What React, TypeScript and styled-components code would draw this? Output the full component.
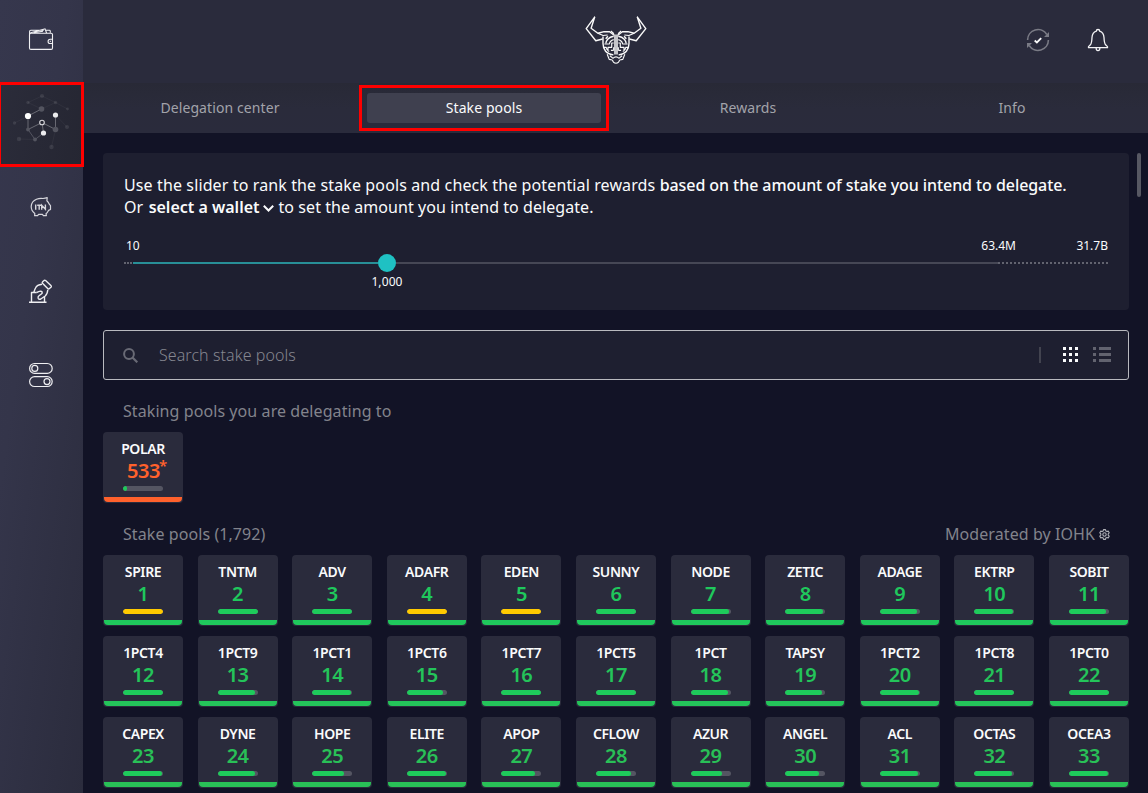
import React from 'react';
import styled, { createGlobalStyle } from 'styled-components';

const GlobalStyle = createGlobalStyle`
  *, *::before, *::after { box-sizing: border-box; }
  body {
    margin: 0;
    overflow: hidden;
    background: #121326;
    font-family: 'Noto Sans', sans-serif;
    color: #fafbfc;
  }
`;

const Window = styled.div`
  display: flex;
  width: 1148px;
  height: 793px;
  overflow: hidden;
`;

const Sidebar = styled.nav`
  flex: none;
  width: 83px;
  display: flex;
  flex-direction: column;
  background: linear-gradient(98deg, #36374d 0%, #34354a 35%, #2b2c3d 100%);
`;

const SidebarItem = styled.div<{ $active?: boolean }>`
  position: relative;
  flex: none;
  height: 84px;
  background: ${(p) => (p.$active ? 'linear-gradient(100deg, #2b2c3a, #252632)' : 'transparent')};

  &:first-child { height: 83px; }

  svg { display: block; }
`;

const Highlight = styled.div<{ $top: number; $left: number; $width: number; $height: number }>`
  position: absolute;
  z-index: 2;
  top: ${(p) => p.$top}px;
  left: ${(p) => p.$left}px;
  width: ${(p) => p.$width}px;
  height: ${(p) => p.$height}px;
  border: 3px solid #fe0000;
`;

const Main = styled.div`
  flex: 1;
  min-width: 0;
  display: flex;
  flex-direction: column;
`;

const Header = styled.header`
  flex: none;
  height: 83px;
  display: grid;
  grid-template-columns: 1fr auto 1fr;
  align-items: center;
  padding: 0 39px 3px 40px;
  background: #2a2b3c;
`;

const HeaderActions = styled.div`
  grid-column: 3;
  display: flex;
  justify-content: flex-end;
  gap: 37px;
`;

const LogoCell = styled.div`
  grid-column: 2;

  svg { display: block; }
`;

const Tabs = styled.div`
  flex: none;
  height: 50px;
  display: flex;
  align-items: center;
  padding: 0 4px 0 5px;
  background: linear-gradient(180deg, #282936 0, #292a38 10px, #2a2b3b 26px, #2a2b3c 100%);
`;

const Tab = styled.div<{ $active?: boolean }>`
  position: relative;
  flex: 1;
  height: 30px;
  margin: 0 15px;
  border-radius: 3px;
  text-align: center;
  font-size: 14px;
  line-height: 30px;
  letter-spacing: 0.1px;
  color: ${(p) => (p.$active ? '#fafbfc' : '#a2a3aa')};
  background: ${(p) => (p.$active ? '#3f404f' : 'transparent')};
`;

const Body = styled.div`
  flex: 1;
  min-height: 0;
  display: flex;
  background: #121326;
`;

const Content = styled.div`
  width: 1046px;
  padding: 20px 0 0 20px;
`;

const ScrollThumb = styled.div`
  width: 4px;
  height: 44px;
  margin: 20px 0 0 8px;
  border-radius: 2px;
  background: #575863;
`;

const RankPanel = styled.section`
  height: 157px;
  padding: 21px 21px 0;
  border-radius: 4px;
  background: #1e1f30;
`;

const Instructions = styled.p`
  margin: 0;
  font-size: 16px;
  line-height: 22px;
  letter-spacing: 0.12px;
  white-space: nowrap;

  b { font-weight: 500; letter-spacing: -0.07px; }
  strong { font-weight: 600; letter-spacing: 0; margin-left: 1px; }
  span { letter-spacing: 0.06px; }
  svg { margin: 0 5px 0 3px; }
`;

const SliderLabels = styled.div`
  display: flex;
  margin-top: 20px;
  padding-left: 2px;
  font-size: 12px;
  line-height: 16px;
  white-space: nowrap;

  span:nth-child(2) { margin-left: auto; }
  span:nth-child(3) { width: 92px; text-align: right; }
`;

const SliderTrack = styled.div`
  display: flex;
  align-items: center;
  height: 18px;
`;

const Dots = styled.div<{ $width: number; $step: number }>`
  width: ${(p) => p.$width}px;
  height: 2px;
  background: repeating-linear-gradient(90deg, #62636f 0 2px, transparent 2px ${(p) => p.$step}px);
`;

const Line = styled.div<{ $filled?: boolean }>`
  flex: ${(p) => (p.$filled ? '0 0 245px' : '1')};
  height: 2px;
  background: ${(p) => (p.$filled ? '#288f97' : '#464755')};
`;

const Thumb = styled.div`
  width: 18px;
  height: 18px;
  border-radius: 50%;
  background: #1fc1c3;
`;

const SliderValue = styled.div`
  width: 60px;
  margin: 2px 0 0 233px;
  text-align: center;
  font-size: 12px;
  line-height: 16px;
  letter-spacing: 0.1px;
`;

const SearchBox = styled.div`
  height: 50px;
  margin-top: 20px;
  padding: 0 16px 0 19px;
  display: flex;
  align-items: center;
  border: 1px solid #b9babf;
  border-radius: 3px;
  background: #1e1f30;

  svg { flex: none; }
  svg:last-child { margin-bottom: 1px; }
`;

const Placeholder = styled.span`
  flex: 1;
  margin-left: 21px;
  font-size: 16px;
  line-height: 22px;
  font-weight: 300;
  letter-spacing: 0.07px;
  color: #85868f;
`;

const Divider = styled.i`
  width: 2px;
  height: 16px;
  margin-right: 22px;
  background: #42434f;
`;

const SectionTitle = styled.div`
  display: flex;
  justify-content: space-between;
  margin-top: 20px;
  padding: 0 19px 0 20px;
  height: 22px;
  font-size: 16px;
  line-height: 22px;
  letter-spacing: 0.08px;
  color: #82838c;
`;

const Moderated = styled.span`
  display: flex;
  align-items: center;
  gap: 4px;
`;

const Grid = styled.div`
  display: grid;
  grid-template-columns: repeat(11, 80px);
  justify-content: space-between;
  row-gap: 10px;
  margin-top: 10px;
`;

const PoolCard = styled.div`
  height: 71px;
  padding: 7px 0 1px;
  display: flex;
  flex-direction: column;
  align-items: center;
  border-radius: 4px;
  background: #2a2b3c;
`;

const Ticker = styled.div`
  font-size: 14px;
  line-height: 19px;
  font-weight: 600;
  letter-spacing: -0.4px;
`;

const Rank = styled.div<{ $color: string; $starred?: boolean }>`
  position: relative;
  height: 28px;
  padding-left: ${(p) => (p.$starred ? 1 : 0)}px;
  font-size: 20px;
  line-height: 26px;
  font-weight: 600;
  letter-spacing: -0.5px;
  color: ${(p) => p.$color};

  sup {
    position: absolute;
    left: calc(100% - 1px);
    top: 1px;
    font-size: 15px;
    line-height: 12px;
  }
`;

const Saturation = styled.div`
  width: 40px;
  height: 5px;
  border-radius: 3px;
  overflow: hidden;
  background: #545562;
`;

const Fill = styled.div<{ $color: string }>`
  height: 5px;
  border-radius: 3px;
  background: ${(p) => p.$color};
`;

const Stripe = styled.div<{ $color: string }>`
  align-self: stretch;
  height: 5px;
  margin: auto 1px 0;
  border-radius: 0 0 4px 4px;
  background: ${(p) => p.$color};
`;

/* ticker and saturation bar width in pixels */
const pools: [string, number][] = [
  ['SPIRE', 40], ['TNTM', 40], ['ADV', 40], ['ADAFR', 40], ['EDEN', 40], ['SUNNY', 40],
  ['NODE', 38], ['ZETIC', 38], ['ADAGE', 37], ['EKTRP', 39], ['SOBIT', 37],
  ['1PCT4', 40], ['1PCT9', 37], ['1PCT1', 39], ['1PCT6', 36], ['1PCT7', 40], ['1PCT5', 40],
  ['1PCT', 37], ['TAPSY', 37], ['1PCT2', 39], ['1PCT8', 40], ['1PCT0', 40],
  ['CAPEX', 39], ['DYNE', 37], ['HOPE', 32], ['ELITE', 39], ['APOP', 34], ['CFLOW', 35],
  ['AZUR', 31], ['ANGEL', 34], ['ACL', 38], ['OCTAS', 38], ['OCEA3', 39],
];
const oversaturated = ['SPIRE', 'ADAFR', 'EDEN'];
const rankColors = ['#1fc85c', '#24c45a', '#29c057'];

interface PoolProps {
  ticker: string;
  rank: number;
  fill: number;
  color: string;
  barColor?: string;
  starred?: boolean;
}

function Pool({ ticker, rank, fill, color, barColor = '#1ecb5b', starred }: PoolProps) {
  return (
    <PoolCard>
      <Ticker>{ticker}</Ticker>
      <Rank $color={color} $starred={starred}>{rank}{starred && <sup>*</sup>}</Rank>
      <Saturation><Fill $color={barColor} style={{ width: fill }} /></Saturation>
      <Stripe $color={color} />
    </PoolCard>
  );
}

function WalletIcon() {
  return (
    <svg width="83" height="83" fill="none" stroke="#f0f0f3" strokeWidth="1.1">
      <rect x="29.5" y="33.2" width="23" height="16.2" rx="1.4" />
      <path d="M29.6 34.5V31.5q0-1.2 1.2-1.2h13M30.5 32.8l14.5-4 1.6 4.2M34 32.6l9-1.4M46 30.3h3.4q.8 0 .9 1v1.5" />
      <path d="M52.5 39.3h-2.3a2.1 2.1 0 0 0 0 4.2h2.3M49.8 41.4h1" />
    </svg>
  );
}

function NetworkIcon() {
  return (
    <svg width="83" height="84" viewBox="0 83 83 84">
      <g stroke="#fff" fill="none">
        <path strokeOpacity=".04" d="M42 96 28 102.500l13.500 6.500M28 116 14.500 123M42 96l13.500 6.500 12 6.500M41.500 109l14-6.500M55.500 115l11.500 12M55.500 129.500 51.500 147M35 139.500 19 139" />
        <path strokeOpacity=".3" d="M41.500 109 28 116v13.500l14-7 13.500 7V115M42 122.500 43.500 133" />
        <path strokeOpacity=".2" d="M28 129.500l7 10 8.500-6.500" />
      </g>
      <g fill="#fff">
        <g fillOpacity=".09">
          <circle cx="42" cy="96" r="2.100" /><circle cx="28" cy="102.500" r="1.700" /><circle cx="55.500" cy="102.500" r="1.700" />
          <circle cx="67.500" cy="109" r="1.400" /><circle cx="14.500" cy="123" r="1.700" /><circle cx="67" cy="127" r="2.100" />
          <circle cx="19" cy="139" r="2.200" /><circle cx="51.500" cy="147" r="2.200" />
        </g>
        <g fill="#53545f">
          <circle cx="41.500" cy="109" r="2.800" /><circle cx="28" cy="129.500" r="1.900" />
          <circle cx="55.500" cy="129.500" r="2.800" /><circle cx="35" cy="139.500" r="1.900" />
        </g>
        <circle cx="28" cy="116" r="3.100" /><circle cx="55.500" cy="115" r="2.600" fill="#ececee" /><circle cx="43.500" cy="133" r="2.600" fill="#ececee" />
      </g>
      <circle cx="42" cy="122.500" r="2.300" fill="#272834" stroke="#d5d5d9" strokeWidth="1.100" />
    </svg>
  );
}

function PiggyIcon() {
  return (
    <svg width="83" height="84" viewBox="0 167 83 84" fill="none" stroke="#d6d6dc" strokeWidth="1.200">
      <path strokeLinejoin="round" d="M36.500 199.300q3-1.300 6.500-.8 2.200-.4 4.200-.8l-.3 3.100q1.700 1.500 2.300 3.300l1.300 1.600v3.800l-2 .9q-1.200 2.400-2.500 3.300l.4 2h-3l-1-1.400h-3.800l-1 1.400h-3l.2-2.300q-3.800-2.800-3.600-7 .3-5 5.300-7.100z" />
      <path strokeWidth="1.400" d="M35.700 204.500v5.200M37.200 205.200h4M39.200 205v4.700M41.700 209.800v-4.500l3.700 4v-4.800" />
    </svg>
  );
}

function VotingIcon() {
  return (
    <svg width="83" height="84" viewBox="0 251 83 84" fill="none" stroke="#eeeef1" strokeWidth="1.400" strokeLinejoin="round">
      <path d="M29 302.300h17.500M31.500 302v-9.500h5M44.500 302v-5.500" />
      <path d="M43.700 280.800q.9-1.100 1.900-.3l5.300 5.100q.9.900 0 1.700l-1.700 1.400q-.8.600-1.500-.1l-5-5q-.9-.9-.2-1.600z" />
      <path d="M42 284.200q-5 .5-6.500 3.800-1 2-1.700 4.500M47.800 289.700q-.4 4.500-2.600 6.300l-4.400 3q-1.800.7-2.600-.7-.6-1.400.8-2.500l3-2.300q.7-2.300-1.600-2.400-1.500.1-4 1.600" />
    </svg>
  );
}

function SettingsIcon() {
  return (
    <svg width="83" height="84" viewBox="0 335 83 84" fill="none" stroke="#eeeef1" strokeWidth="1.200">
      <rect x="29.600" y="363.500" width="22.600" height="9.900" rx="4.950" /><circle cx="34.800" cy="368.450" r="3" />
      <rect x="29.600" y="376.600" width="22.600" height="9.900" rx="4.950" /><circle cx="47" cy="381.550" r="3" />
    </svg>
  );
}

function LogoHalf() {
  return (
    <g>
      <path strokeWidth="1.400" d="M595.400 16.800 586.800 28.600l9.600 12.100 6.800-1.700M595.400 16.800l-3.700 11.400 6.800 5 6.200-1.600 5.500.2 4.600 3.500" />
      <path d="M598.500 33.200l5.200 2.300 4.500-.5M611.500 31l3 2.700" />
      <path strokeWidth="1.400" d="M603.600 36.500v7q0 4.500 2.600 7.700 2.600 3 7.800 3.700M614.300 36.200q-3.700.5-6 3-1.600 1.800-1.900 4.300M606.300 38.800l2.200-2.600" />
      <path d="M614.300 39.600q-3.800.9-4.300 4.400h-5M614.300 43h-2v4.300h-3.700v3M604.500 47.300h2.300q.3 3 3 4.300M614.300 50.300h-2.800M614.300 47.300v3" />
      <path strokeWidth="1.500" d="M615.600 34.500v20" />
      <path d="M607.800 54.200l2 5.200 3.200.6M610.500 55.800l3.200 2.600M613 60q.7 3.200 3.600 3.200M613.500 58.400q1.500-1.500 3.100-1.500" />
    </g>
  );
}

function BullLogo() {
  return (
    <svg width="62" height="50" viewBox="585.600 15 62 50" fill="none" stroke="#fafafa" strokeWidth="1.150" strokeLinejoin="round">
      <LogoHalf />
      <g transform="translate(1233.200 0) scale(-1 1)"><LogoHalf /></g>
    </svg>
  );
}

function SyncIcon() {
  return (
    <svg width="24" height="24" viewBox="1026 28 24 24" fill="none">
      <path d="M1027.600 40a10.400 10.400 0 0 1 19.200-5.500M1048.400 40a10.400 10.400 0 0 1-19.200 5.500" stroke="#7a7b85" strokeWidth="1.600" />
      <path d="M1049 32v5h-5zM1027 48v-5h5z" fill="#7a7b85" />
      <path d="M1034.700 40.500l2.200 2 4.300-4.300" stroke="#fafafa" strokeWidth="1.800" />
    </svg>
  );
}

function BellIcon() {
  return (
    <svg width="22" height="24" viewBox="1087 28 22 24" fill="none" stroke="#f3f3f5" strokeWidth="1.300" strokeLinejoin="round">
      <path d="M1096.300 31.200q0-1.700 1.700-1.700t1.700 1.700q4 1.500 4.300 6.300.2 5.500 1.600 7.300l1.900 1.800v1.100h-19v-1.100l1.900-1.800q1.400-1.800 1.600-7.300.3-4.800 4.300-6.300zM1096.200 48q-.2 2.600 1.800 2.600t1.800-2.600" />
    </svg>
  );
}

function Chevron() {
  return (
    <svg width="11" height="8" viewBox="0 0 11 8" fill="none" stroke="#fafbfc" strokeWidth="2">
      <path d="M.8.800 5.500 5.500 10.200.8" />
    </svg>
  );
}

function SearchIcon() {
  return (
    <svg width="15" height="15" fill="none" stroke="#696a75">
      <circle cx="6" cy="6" r="4.900" strokeWidth="2" /><path d="M9.500 9.500l4.800 4.800" strokeWidth="2.200" />
    </svg>
  );
}

function ViewIcons() {
  return (
    <svg width="49" height="15" shapeRendering="crispEdges">
      <path fill="#fafbfc" d="M0 0h3v3H0zM6 0h3v3H6zM12 0h3v3h-3zM0 6h3v3H0zM6 6h3v3H6zM12 6h3v3h-3zM0 12h3v3H0zM6 12h3v3H6zM12 12h3v3h-3z" />
      <path fill="#62636f" d="M30 0h3v3h-3zM36 0h12v3H36zM30 6h3v3h-3zM36 6h12v3H36zM30 12h3v3h-3zM36 12h12v3H36z" />
    </svg>
  );
}

function GearIcon() {
  return (
    <svg width="11" height="11" viewBox="0 0 11 11" fill="none" stroke="#b0b1b7" strokeWidth="1.1">
      <path strokeLinejoin="round" d="M4.500.6h2l.3 1.300 1.100.6 1.300-.4 1 1.700-1 1v1.400l1 1-1 1.700-1.300-.4-1.100.6-.3 1.300h-2l-.3-1.300-1.100-.6-1.300.4-1-1.700 1-1V4.800l-1-1 1-1.700 1.300.4 1.100-.6z" />
      <circle cx="5.500" cy="5.500" r="1.700" />
    </svg>
  );
}

export default function App() {
  return (
    <>
      <GlobalStyle />
      <Window>
        <Sidebar>
          <SidebarItem><WalletIcon /></SidebarItem>
          <SidebarItem $active>
            <NetworkIcon />
            <Highlight $top={-1} $left={-2} $width={86} $height={85} />
          </SidebarItem>
          <SidebarItem><PiggyIcon /></SidebarItem>
          <SidebarItem><VotingIcon /></SidebarItem>
          <SidebarItem><SettingsIcon /></SidebarItem>
        </Sidebar>
        <Main>
          <Header>
            <LogoCell><BullLogo /></LogoCell>
            <HeaderActions><SyncIcon /><BellIcon /></HeaderActions>
          </Header>
          <Tabs>
            <Tab>Delegation center</Tab>
            <Tab $active>
              Stake pools
              <Highlight $top={-8} $left={-8} $width={250} $height={46} />
            </Tab>
            <Tab>Rewards</Tab>
            <Tab>Info</Tab>
          </Tabs>
          <Body>
            <Content>
              <RankPanel>
                <Instructions>
                  Use the slider to rank the stake pools and check the potential rewards{' '}
                  <b>based on the amount of stake you intend to delegate.</b>
                  <br />
                  Or <strong>select a wallet</strong><Chevron />
                  <span>to set the amount you intend to delegate.</span>
                </Instructions>
                <SliderLabels><span>10</span><span>63.4M</span><span>31.7B</span></SliderLabels>
                <SliderTrack>
                  <Dots $width={9} $step={3} />
                  <Line $filled />
                  <Thumb />
                  <Line />
                  <Dots $width={110} $step={4} />
                </SliderTrack>
                <SliderValue>1,000</SliderValue>
              </RankPanel>
              <SearchBox>
                <SearchIcon />
                <Placeholder>Search stake pools</Placeholder>
                <Divider />
                <ViewIcons />
              </SearchBox>
              <SectionTitle>Staking pools you are delegating to</SectionTitle>
              <Grid>
                <Pool ticker="POLAR" rank={533} fill={4} color="#ff612c" starred />
              </Grid>
              <SectionTitle>
                <span>Stake pools (1,792)</span>
                <Moderated>Moderated by IOHK<GearIcon /></Moderated>
              </SectionTitle>
              <Grid>
                {pools.map(([ticker, fill], i) => (
                  <Pool
                    key={ticker}
                    ticker={ticker}
                    rank={i + 1}
                    fill={fill}
                    color={rankColors[Math.floor(i / 11)]}
                    barColor={oversaturated.includes(ticker) ? '#ffca00' : undefined}
                  />
                ))}
              </Grid>
            </Content>
            <ScrollThumb />
          </Body>
        </Main>
      </Window>
    </>
  );
}
